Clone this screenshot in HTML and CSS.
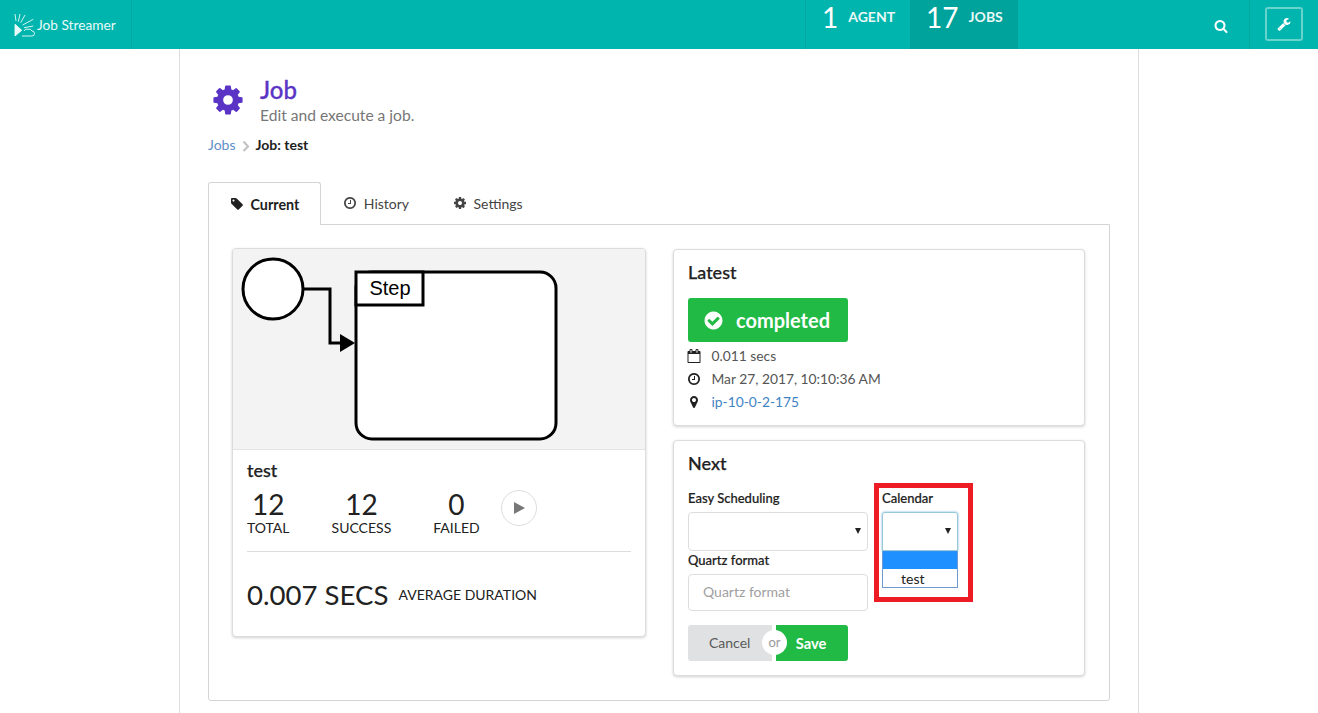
FILE: index.html
```html
<!DOCTYPE html>
<html lang="en">
<head>
    <meta charset="UTF-8">
    <title>Job Streamer</title>
    <link rel="stylesheet" href="styles.css">
</head>
<body>
    <svg class="icon-defs" xmlns="http://www.w3.org/2000/svg">
        <symbol id="i-cog" viewBox="0 0 1792 1792"><path d="M1152 896q0-106-75-181t-181-75-181 75-75 181 75 181 181 75 181-75 75-181zm512-109v222q0 12-8 23t-20 13l-185 28q-19 54-39 91 35 50 107 138 10 12 10 25t-9 23q-27 37-99 108t-94 71q-12 0-26-9l-138-108q-44 23-91 38-16 136-29 186-7 28-36 28h-222q-14 0-24.500-8.500t-11.500-21.500l-28-184q-49-16-90-37l-141 107q-10 9-25 9-14 0-25-11-126-114-165-168-7-10-7-23 0-12 8-23 15-21 51-66.500t54-70.500q-27-50-41-99l-183-27q-13-2-21-12.500t-8-23.500v-222q0-12 8-23t19-13l186-28q14-46 39-92-40-57-107-138-10-12-10-24 0-10 9-23 26-36 98.500-107.500t94.500-71.500q13 0 26 10l138 107q44-23 91-38 16-136 29-186 7-28 36-28h222q14 0 24.500 8.500t11.500 21.500l28 184q49 16 90 37l142-107q9-9 24-9 13 0 25 10 129 119 165 170 7 8 7 22 0 12-8 23-15 21-51 66.500t-54 70.500q26 50 41 98l183 28q13 2 21 12.500t8 23.500z"/></symbol>
        <symbol id="i-search" viewBox="0 0 1792 1792"><path d="M1216 832q0-185-131.500-316.500t-316.500-131.500-316.500 131.500-131.500 316.500 131.500 316.500 316.500 131.500 316.500-131.500 131.500-316.500zm512 832q0 52-38 90t-90 38q-54 0-90-38l-343-342q-179 124-399 124-143 0-273.500-55.500t-225-150-150-225-55.500-273.500 55.500-273.500 150-225 225-150 273.500-55.500 273.500 55.500 225 150 150 225 55.500 273.500q0 220-124 399l343 343q37 37 37 90z"/></symbol>
        <symbol id="i-wrench" viewBox="0 0 1792 1792"><path d="M448 1472q0-26-19-45t-45-19-45 19-19 45 19 45 45 19 45-19 19-45zm644-420l-682 682q-37 37-90 37-52 0-91-37l-106-108q-38-36-38-90 0-53 38-91l681-681q39 98 114.500 173.500t173.500 114.500zm634-435q0 39-23 106-47 134-164.500 217.500t-258.500 83.500q-185 0-316.500-131.500t-131.500-316.500 131.500-316.500 316.500-131.500q58 0 121.500 16.500t107.500 46.500q16 11 16 28t-16 28l-293 169v224l193 107q5-3 79-48.500t135.500-81 70.500-35.500q15 0 23.500 10t8.500 25z"/></symbol>
        <symbol id="i-tag" viewBox="0 0 1792 1792"><path d="M576 448q0-53-37.500-90.500t-90.500-37.500-90.500 37.500-37.500 90.500 37.500 90.500 90.500 37.500 90.500-37.500 37.500-90.500zm1067 576q0 53-37 90l-491 492q-39 37-91 37-53 0-90-37l-715-716q-38-37-64.500-101t-26.500-117v-416q0-52 38-90t90-38h416q53 0 117 26.500t102 64.500l715 714q37 39 37 91z"/></symbol>
        <symbol id="i-clock" viewBox="0 0 1792 1792"><path d="M1024 544v448q0 14-9 23t-23 9h-320q-14 0-23-9t-9-23v-64q0-14 9-23t23-9h224v-352q0-14 9-23t23-9h64q14 0 23 9t9 23zm416 352q0-148-73-273t-198-198-273-73-273 73-198 198-73 273 73 273 198 198 273 73 273-73 198-198 73-273zm224 0q0 209-103 385.500t-279.500 279.500-385.500 103-385.500-103-279.500-279.500-103-385.500 103-385.500 279.500-279.500 385.500-103 385.500 103 279.500 279.500 103 385.500z"/></symbol>
        <symbol id="i-check" viewBox="0 0 1792 1792"><path d="M1412 734q0-28-18-46l-91-90q-19-19-45-19t-45 19l-408 407-226-226q-19-19-45-19t-45 19l-91 90q-18 18-18 46 0 27 18 45l362 362q19 19 45 19 27 0 46-19l543-543q18-18 18-45zm252 162q0 209-103 385.500t-279.500 279.500-385.500 103-385.500-103-279.500-279.500-103-385.500 103-385.500 279.500-279.500 385.500-103 385.500 103 279.500 279.500 103 385.500z"/></symbol>
        <symbol id="i-marker" viewBox="0 0 1792 1792"><path d="M1152 640q0-106-75-181t-181-75-181 75-75 181 75 181 181 75 181-75 75-181zm256 0q0 109-33 179l-364 774q-16 33-47.500 52t-67.500 19-67.500-19-46.500-52l-365-774q-33-70-33-179 0-212 150-362t362-150 362 150 150 362z"/></symbol>
        <symbol id="i-calendar" viewBox="0 0 1792 1792"><path d="M192 1664h1408v-1024h-1408v1024zm384-1216v-288q0-14-9-23t-23-9h-64q-14 0-23 9t-9 23v288q0 14 9 23t23 9h64q14 0 23-9t9-23zm768 0v-288q0-14-9-23t-23-9h-64q-14 0-23 9t-9 23v288q0 14 9 23t23 9h64q14 0 23-9t9-23zm384-64v1280q0 52-38 90t-90 38h-1408q-52 0-90-38t-38-90v-1280q0-52 38-90t90-38h128v-96q0-66 47-113t113-47h64q66 0 113 47t47 113v96h384v-96q0-66 47-113t113-47h64q66 0 113 47t47 113v96h128q52 0 90 38t38 90z"/></symbol>
    </svg>

    <!-- Top menu -->
    <header class="top-menu">
        <a class="logo">
            <svg class="logo-mark" viewBox="0 0 21 24" fill="none" stroke="#eafafa" stroke-width="0.9">
                <path d="M1 1 L2 8 M6 1 L4.300 8.700 M11 2 L6.700 9.700 M19.300 6.300 L8.700 12 M19.300 13 L10 14.700"/>
                <path d="M1 11.300 L7.700 17.300 L1 23 Z" fill="#eafafa"/>
                <path d="M8 23 H18 Q20.500 23 20.500 20.500 Q20.500 18 18 18 Q17 15.500 14 16.300 Q11.500 15 10 18"/>
            </svg>
            <span>Job Streamer</span>
        </a>
        <div class="stats">
            <a class="stat"><b>1</b><span>AGENT</span></a>
            <a class="stat active"><b>17</b><span>JOBS</span></a>
        </div>
        <div class="menu-right">
            <a class="menu-search"><svg class="icon"><use href="#i-search"/></svg></a>
            <div class="menu-tool">
                <a class="tool-button"><svg class="icon"><use href="#i-wrench"/></svg></a>
            </div>
        </div>
    </header>

    <main class="main-container">
        <div class="page-header">
            <svg class="icon header-icon"><use href="#i-cog"/></svg>
            <div>
                <h2>Job</h2>
                <p>Edit and execute a job.</p>
            </div>
        </div>

        <div class="breadcrumb">
            <a>Jobs</a>
            <svg class="crumb-sep" viewBox="0 0 8 12" fill="none" stroke="#c4c4c4" stroke-width="2.2"><path d="M1.500 1.500 L6 6.500 L1.500 11"/></svg>
            <b>Job: test</b>
        </div>

        <nav class="tabs">
            <a class="tab active"><svg class="icon"><use href="#i-tag"/></svg>Current</a>
            <a class="tab"><svg class="icon"><use href="#i-clock"/></svg>History</a>
            <a class="tab"><svg class="icon"><use href="#i-cog"/></svg>Settings</a>
        </nav>

        <section class="tab-panel">
            <!-- Job card with the workflow diagram -->
            <article class="card job-card">
                <div class="diagram">
                    <svg width="412" height="200" viewBox="0 0 412 200">
                        <circle cx="40" cy="40" r="30" fill="#fff" stroke="#000" stroke-width="3"/>
                        <rect x="123" y="23" width="200" height="167" rx="16" fill="#fff" stroke="#000" stroke-width="3"/>
                        <rect x="123" y="23" width="67" height="33" fill="#fff" stroke="#000" stroke-width="3"/>
                        <text x="157" y="46" text-anchor="middle" class="step-label">Step</text>
                        <path d="M70 40 H97 V94 H108" fill="none" stroke="#000" stroke-width="3"/>
                        <path d="M107 85 L122 94 L107 103 Z" fill="#000"/>
                    </svg>
                </div>
                <div class="job-body">
                    <h3>test</h3>
                    <div class="job-stats">
                        <div class="job-stat total"><b>12</b><span>TOTAL</span></div>
                        <div class="job-stat success"><b>12</b><span>SUCCESS</span></div>
                        <div class="job-stat failed"><b>0</b><span>FAILED</span></div>
                        <a class="play-button"><i></i></a>
                    </div>
                    <hr>
                    <div class="job-duration">
                        <b>0.007 SECS</b>
                        <span>AVERAGE DURATION</span>
                    </div>
                </div>
            </article>

            <div class="side-column">
                <article class="card latest-card">
                    <h3>Latest</h3>
                    <div class="status-label"><svg class="icon"><use href="#i-check"/></svg>completed</div>
                    <ul class="run-info">
                        <li><svg class="icon"><use href="#i-calendar"/></svg><span>0.011 secs</span></li>
                        <li><svg class="icon"><use href="#i-clock"/></svg><span>Mar 27, 2017, 10:10:36 AM</span></li>
                        <li><svg class="icon"><use href="#i-marker"/></svg><a>ip-10-0-2-175</a></li>
                    </ul>
                </article>

                <article class="card next-card">
                    <h3>Next</h3>
                    <form class="schedule-form">
                        <div class="schedule-left">
                            <label>Easy Scheduling</label>
                            <div class="select-box"><i></i></div>
                            <label>Quartz format</label>
                            <input type="text" placeholder="Quartz format">
                        </div>
                        <div class="calendar-mark">
                            <label>Calendar</label>
                            <div class="select-box open"><i></i></div>
                            <ul class="select-list">
                                <li class="selected"></li>
                                <li>test</li>
                            </ul>
                        </div>
                    </form>
                    <div class="button-pair">
                        <button type="button" class="cancel">Cancel</button>
                        <span class="or">or</span>
                        <button type="button" class="save">Save</button>
                    </div>
                </article>
            </div>
        </section>
    </main>
</body>
</html>
```

FILE: styles.css
```css
* {
    box-sizing: border-box;
}
html, body {
    height: 100%;
}
body {
    margin: 0;
    font-family: Lato, "Open Sans", sans-serif;
    font-size: 14px;
    color: #212121;
    background-color: #fff;
    overflow: hidden;
}
a {
    color: inherit;
    text-decoration: none;
}
.icon-defs {
    display: none;
}
.icon {
    width: 1em;
    height: 1em;
    fill: currentColor;
    flex: none;
}

/* Top menu */
.top-menu {
    display: flex;
    height: 49px;
    background-color: #00b5ad;
    color: #fff;
}
.logo {
    display: flex;
    align-items: center;
    width: 132px;
    padding-left: 14px;
    border-right: 1px solid #00a79f;
    font-size: 13.7px;
    color: #eafafa;
}
.logo-mark {
    width: 21px;
    height: 24px;
    margin-right: 2px;
}
.stats {
    display: flex;
    margin-left: 673px;
    border-left: 1px solid #00a79f;
}
.stat {
    display: flex;
    align-items: flex-start;
    height: 49px;
    padding: 0 15px 0 16px;
}
.stat b {
    font-size: 28px;
    font-weight: 400;
    line-height: 34px;
    margin-right: 10px;
}
.stat span {
    font-size: 14px;
    font-weight: 700;
    line-height: 33px;
    color: #e8f8f7;
}
.stat.active {
    background-color: #00a39b;
}
.menu-right {
    display: flex;
    flex: 1;
    justify-content: flex-end;
}
.menu-search {
    display: flex;
    align-items: center;
    padding: 2px 21px 0 0;
    font-size: 14px;
}
.menu-tool {
    width: 69px;
    padding: 7px 0 0 15px;
    border-left: 1px solid #00a79f;
}
.tool-button {
    display: flex;
    align-items: center;
    justify-content: center;
    width: 38px;
    height: 34px;
    border: 2px solid #66d3ce;
    border-radius: 3px;
    font-size: 14px;
}

/* Page */
.main-container {
    width: 960px;
    height: 664px;
    margin-left: 179px;
    padding: 26px 28px 0;
    border-left: 1px solid #ddd;
    border-right: 1px solid #ddd;
}
.page-header {
    display: flex;
    align-items: center;
    padding-left: 3px;
}
.header-icon {
    width: 34px;
    height: 34px;
    margin-right: 15px;
    color: #5a35c5;
}
.page-header h2 {
    margin: 0;
    font-size: 24px;
    font-weight: 500;
    line-height: 30px;
    color: #5a35c5;
    -webkit-text-stroke: 0.3px #5a35c5;
}
.page-header p {
    margin: 0;
    font-size: 15.6px;
    line-height: 20px;
    color: #767676;
}
.breadcrumb {
    display: flex;
    align-items: center;
    margin-top: 11px;
    font-size: 14px;
    line-height: 18px;
}
.breadcrumb a {
    color: #5f8fc9;
}
.crumb-sep {
    width: 8px;
    height: 12px;
    margin: 2px 6px 0;
}
.tabs {
    display: flex;
    margin-top: 28px;
    height: 42px;
}
.tab {
    display: flex;
    align-items: center;
    gap: 6.5px;
    padding: 0 22px;
    font-size: 14px;
    color: #444;
}
.tab .icon {
    font-size: 14px;
}
.tab.active {
    position: relative;
    z-index: 1;
    height: 43px;
    padding: 0 21px;
    border: 1px solid #d4d4d5;
    border-bottom: 0;
    border-radius: 3px 3px 0 0;
    background-color: #fff;
    font-size: 14.3px;
    font-weight: 700;
    color: #212121;
}
.tab-panel {
    display: flex;
    gap: 27px;
    width: 902px;
    height: 477px;
    padding: 23px;
    border: 1px solid #d4d4d5;
    border-radius: 0 0 3px 3px;
}

/* Cards */
.card {
    flex: none;
    background-color: #fff;
    border: 1px solid #dcdcdc;
    border-radius: 4px;
    box-shadow: 0 1px 3px rgba(0, 0, 0, 0.18);
}
.card h3 {
    margin: 0;
    font-size: 18px;
    font-weight: 500;
    line-height: 24px;
    -webkit-text-stroke: 0.25px #212121;
}
.job-card {
    width: 414px;
    height: 389px;
}
.diagram {
    height: 201px;
    background-color: #f3f3f3;
    border-bottom: 1px solid #e4e4e4;
    border-radius: 3px 3px 0 0;
}
.diagram svg {
    display: block;
}
.step-label {
    font-family: "Liberation Sans", Arial, sans-serif;
    font-size: 20px;
}
.job-body {
    padding: 8px 14px;
}
.job-stats {
    display: flex;
    align-items: flex-start;
    margin-top: 7px;
}
.job-stat {
    display: flex;
    flex-direction: column;
    align-items: center;
}
.job-stat b {
    font-size: 28px;
    font-weight: 400;
    line-height: 30px;
}
.job-stat span {
    font-size: 14px;
    line-height: 17px;
}
.success {
    margin-left: 42px;
}
.failed {
    margin-left: 42px;
}
.play-button {
    display: flex;
    align-items: center;
    justify-content: center;
    width: 36px;
    height: 36px;
    margin: 1px 0 0 21px;
    border: 1px solid #ddd;
    border-radius: 50%;
}
.play-button i {
    border-left: 11px solid #777;
    border-top: 6px solid transparent;
    border-bottom: 6px solid transparent;
    margin-left: 1px;
}
.job-body hr {
    height: 1px;
    margin: 15px 0 0;
    border: 0;
    background-color: #ddd;
}
.job-duration {
    display: flex;
    align-items: center;
    gap: 10px;
    margin-top: 24px;
}
.job-duration b {
    font-size: 27.6px;
    font-weight: 400;
    line-height: 38px;
}
.job-duration span {
    padding-bottom: 2px;
    font-size: 14px;
}

/* Right column */
.side-column {
    display: flex;
    flex-direction: column;
    gap: 14px;
    width: 412px;
    margin-top: 1px;
}
.latest-card {
    height: 177px;
    padding: 10px 14px;
}
.status-label {
    display: flex;
    align-items: center;
    gap: 12px;
    width: 160px;
    height: 44px;
    margin-top: 14px;
    padding-left: 15px;
    background-color: #21ba45;
    border-radius: 3px;
    color: #fff;
    font-size: 20px;
    font-weight: 700;
}
.status-label .icon {
    font-size: 21px;
}
.run-info {
    margin: 2px 0 0;
    padding: 0;
    list-style: none;
    font-size: 13.8px;
    color: #555;
}
.run-info li {
    display: flex;
    align-items: center;
    gap: 10.5px;
    height: 23px;
}
.run-info .icon {
    margin-left: -1px;
    color: #212121;
    font-size: 14px;
}
.run-info a {
    color: #4183c4;
}
.next-card {
    height: 236px;
    padding: 10px 14px;
}
.schedule-form {
    display: flex;
    gap: 6px;
    margin-top: 8px;
}
.schedule-form label {
    display: block;
    font-size: 13px;
    font-weight: 500;
    line-height: 19px;
    -webkit-text-stroke: 0.2px #212121;
}
.schedule-left {
    width: 180px;
    padding-top: 6px;
}
.select-box {
    position: relative;
    height: 39px;
    margin-top: 4px;
    border: 1px solid #ddd;
    border-radius: 4px;
}
.select-box i {
    position: absolute;
    right: 6px;
    top: 15px;
    border-top: 6px solid #222;
    border-left: 3px solid transparent;
    border-right: 3px solid transparent;
}
.select-box.open {
    border-color: #96c8da;
    box-shadow: 0 0 2px #5b9bd5;
    border-radius: 3px 3px 0 0;
}
.schedule-left label + input {
    display: block;
    width: 100%;
    height: 37px;
    margin-top: 4px;
    padding: 0 14px 2px;
    border: 1px solid #ddd;
    border-radius: 4px;
    font-family: inherit;
    font-size: 14px;
}
.schedule-left input::placeholder {
    color: #a0a0a0;
}
.calendar-mark {
    width: 99px;
    height: 119px;
    padding: 1px 10px 0 3px;
    border: 5px solid #ed1c24;
}
.select-list {
    margin: 0;
    padding: 0;
    list-style: none;
    border: 1px solid #6f99cf;
    border-top: 0;
    font-size: 14px;
}
.select-list li {
    height: 18px;
    padding-left: 18px;
    line-height: 19px;
}
.select-list .selected {
    background-color: #1e90ff;
}
.button-pair {
    display: flex;
    position: relative;
    margin-top: 14px;
    width: 160px;
}
.button-pair button {
    height: 36px;
    border: 0;
    padding-bottom: 2px;
    font-family: inherit;
    font-size: 14px;
}
.button-pair .cancel {
    width: 84px;
    background-color: #e0e1e2;
    color: #5a5a5a;
    border-radius: 3px 0 0 3px;
    text-align: left;
    padding-left: 21px;
}
.button-pair .save {
    width: 72px;
    margin-left: 4px;
    padding-left: 4px;
    background-color: #21ba45;
    color: #fff;
    font-size: 14.7px;
    font-weight: 700;
    border-radius: 0 3px 3px 0;
}
.or {
    position: absolute;
    left: 74px;
    top: 5px;
    width: 25px;
    height: 25px;
    border-radius: 50%;
    background-color: #fff;
    color: #999;
    font-size: 13px;
    line-height: 25px;
    text-align: center;
}
```
